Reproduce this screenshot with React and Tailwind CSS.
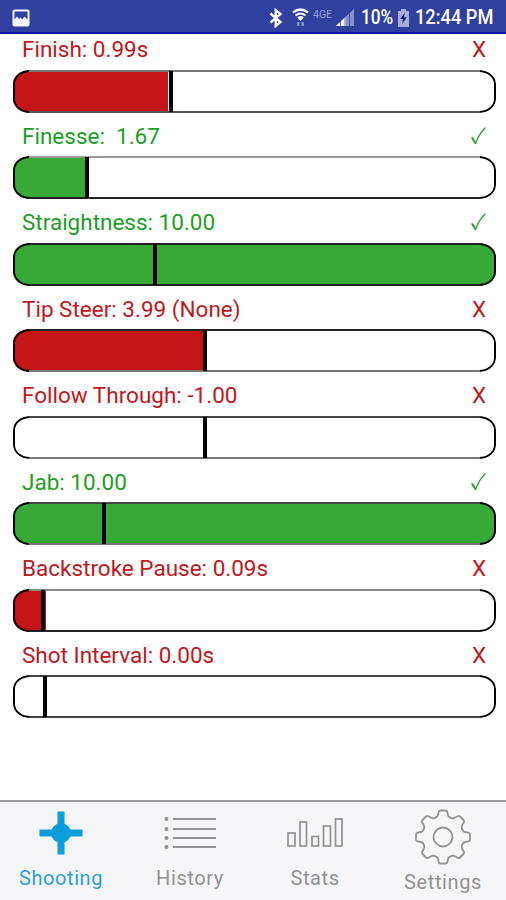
import React from "react";
import clsx from "clsx";

// fill and marker are in pixels, measured from the left edge of the bar
const METRICS = [
  { label: "Finish: 0.99s", pass: false, fill: 155, marker: 156, top: "bg-[#777]", bottom: "bg-[#555]" },
  { label: "Finesse:  1.67", pass: true, fill: 73, marker: 72, top: "bg-[#999]", bottom: "bg-[#222]" },
  { label: "Straightness: 10.00", pass: true, fill: 484, marker: 140, top: "bg-[#222]", bottom: "bg-[#222]" },
  { label: "Tip Steer: 3.99 (None)", pass: false, fill: 190, marker: 190.5, top: "bg-[#222]", bottom: "bg-[#777]" },
  { label: "Follow Through: -1.00", pass: false, fill: 0, marker: 190, top: "bg-[#444]", bottom: "bg-[#777]" },
  { label: "Jab: 10.00", pass: true, fill: 484, marker: 89, top: "bg-[#444]", bottom: "bg-[#777]" },
  { label: "Backstroke Pause: 0.09s", pass: false, fill: 33, marker: 28, top: "bg-[#888]", bottom: "bg-[#222]" },
  { label: "Shot Interval: 0.00s", pass: false, fill: 0, marker: 30, top: "bg-[#444]", bottom: "bg-[#444]" },
];

const StatusBar = () => {
  return (
    <header className="flex h-[34px] shrink-0 items-center border-b-2 border-[#1216a0] bg-[#2f409f] pt-[3px] pr-3 pl-3 text-white">
      <svg width="18" height="18" viewBox="0 0 18 18">
        <rect x="0.5" y="0.5" width="17" height="17" rx="2" fill="#f4f6ff" />
        <path d="M2.5 2.5h13v8l-3-3-2.3 3-1.5-2-1.5 1.5L5 7.5l-2.5 3z" fill="#2f409f" />
      </svg>
      <div className="ml-auto flex items-center">
        <svg className="mr-[9px]" width="14" height="20" viewBox="0 0 14 20" fill="none" stroke="#fff" strokeWidth="2.3">
          <path d="M1.5 5.5L11.5 14 6.7 18V2l4.8 4L1.5 14.5" />
        </svg>
        <svg className="mr-[4px]" width="17" height="20" viewBox="0 0 17 20" fill="none" stroke="#fff">
          <path d="M1 4.5Q8.5-1.5 16 4.5" strokeWidth="2.2" />
          <path d="M3.5 7.5Q8.5 3.5 13.5 7.5" strokeWidth="2" />
          <path d="M5.2 9.4Q8.5 6.6 11.8 9.4L8.5 13z" fill="#fff" stroke="none" />
          <path d="M6.3 14v4M10.7 14v4" stroke="#8f9ad0" strokeWidth="2.2" />
        </svg>
        <span className="mr-[3px] -mt-[5px] w-5 text-[10px] leading-none whitespace-nowrap text-[#97a1d4]">
          <span className="inline-block origin-left scale-x-[1.05]">4GE</span>
        </span>
        <svg className="mr-[7px]" width="18" height="18" viewBox="0 0 18 18">
          <path d="M0 17L18 0v17z" fill="#8792cb" />
          <path d="M0 17L10 7.6V17z" fill="#fff" />
          <path d="M4.5 4v14M9 4v14M13.5 0v18" stroke="#2f409f" strokeWidth="0.8" />
        </svg>
        <span className="w-[33px] text-[19.5px] leading-5 font-medium whitespace-nowrap">
          <span className="inline-block origin-left scale-x-[0.88]">10%</span>
        </span>
        <svg className="mr-[6px] ml-[4px]" width="11" height="18" viewBox="0 0 11 18">
          <path d="M3 0h5v2h3v16H0V2h3z" fill="#a6aed9" />
          <path d="M6.8 3.5L2.3 10h2.6l-.8 5L8.8 8.3H6z" fill="#17236c" />
        </svg>
        <span className="w-[79px] text-[19.5px] leading-5 font-medium whitespace-nowrap">
          <span className="inline-block origin-left scale-x-[0.935]">12:44 PM</span>
        </span>
      </div>
    </header>
  );
};

const CheckMark = () => (
  <svg width="15" height="18" viewBox="0 0 15 18" fill="none" stroke="#22a022" strokeLinecap="round">
    <path d="M1.2 11L4.5 16.2" strokeWidth="1.9" />
    <path d="M4.5 16.2Q8 7 14 1" strokeWidth="1.2" />
  </svg>
);

const Metric = ({ label, pass, fill, marker, top, bottom }) => {
  return (
    <section className="h-[86.5px] pr-[10px] pl-[12.5px]">
      <div
        className={clsx(
          "flex h-[35.5px] items-start justify-between pr-[10px] pl-[9.5px]",
          pass ? "text-[#1ba01f]" : "text-[#c2171b]"
        )}
      >
        <span className="text-[22.5px] leading-[30px] whitespace-pre">{label}</span>
        {pass ? (
          <span className="pt-[6px]">
            <CheckMark />
          </span>
        ) : (
          <span className="text-[22.5px] leading-[30px]">X</span>
        )}
      </div>
      <div className="relative h-[43px] overflow-hidden rounded-[17px/14px] bg-white">
        <div className={clsx("h-full", pass ? "bg-[#36a936]" : "bg-[#c51415]")} style={{ width: fill }} />
        <div className="absolute inset-0 rounded-[17px/14px] border-2 border-black" />
        <div className={clsx("absolute inset-x-[16px] top-0 h-[2px]", top)} />
        <div className={clsx("absolute inset-x-[16px] bottom-0 h-[2px]", bottom)} />
        <div className="absolute inset-y-px w-[4px] bg-black" style={{ left: marker }} />
      </div>
    </section>
  );
};

const ShootingIcon = () => (
  <svg width="44" height="44" viewBox="0 0 44 44" fill="#0b9edb">
    <path d="M18.5 .5h7v43h-7zM.5 18.5h43v7H.5z" />
    <circle cx="22" cy="22" r="10" />
  </svg>
);

const HistoryIcon = () => (
  <svg width="52" height="34" viewBox="0 0 52 34" stroke="#929292" strokeWidth="1.8">
    <path d="M9 3h43M9 13h43M9 22h43M9 31h43" />
    <g fill="#929292" stroke="none">
      <circle cx="2.5" cy="3" r="2" />
      <circle cx="2.5" cy="13" r="2" />
      <circle cx="2.5" cy="22" r="2" />
      <circle cx="2.5" cy="31" r="2" />
    </g>
  </svg>
);

const StatsIcon = () => (
  <svg width="56" height="29" viewBox="0 0 56 29" fill="none" stroke="#929292" strokeWidth="1.7">
    <rect x="1" y="15" width="7" height="13" />
    <rect x="13" y="4" width="6.5" height="24" />
    <rect x="25" y="18.5" width="6.5" height="9.5" />
    <rect x="36.5" y="8" width="7" height="20" />
    <rect x="48.5" y="1" width="6.5" height="27" />
  </svg>
);

const SettingsIcon = () => (
  <svg width="58" height="56" viewBox="-29 -28 58 56" fill="none" stroke="#929292" strokeWidth="1.8" strokeLinejoin="round">
    <circle r="9.5" />
    <path d="M-2.5-26.5H2.5Q4-26.5 4.3-25L5-22Q5.3-20.3 7-19.6L8.5-18.9Q10.3-18.2 11.8-19.2L14.5-20.8Q15.8-21.6 17-20.5L20.5-17Q21.6-15.8 20.8-14.5L19.2-11.8Q18.2-10.3 18.9-8.5L19.6-7Q20.3-5.3 22-5L25.5-4.3Q27-4 27-2.5V2.5Q27 4 25.5 4.3L22 5Q20.3 5.3 19.6 7L18.9 8.5Q18.2 10.3 19.2 11.8L20.8 14.5Q21.6 15.8 20.5 17L17 20.5Q15.8 21.6 14.5 20.8L11.8 19.2Q10.3 18.2 8.5 18.9L7 19.6Q5.3 20.3 5 22L4.3 25Q4 26.5 2.5 26.5H-2.5Q-4 26.5-4.3 25L-5 22Q-5.3 20.3-7 19.6L-8.5 18.9Q-10.3 18.2-11.8 19.2L-14.5 20.8Q-15.8 21.6-17 20.5L-20.5 17Q-21.6 15.8-20.8 14.5L-19.2 11.8Q-18.2 10.3-18.9 8.5L-19.6 7Q-20.3 5.3-22 5L-25.5 4.3Q-27 4-27 2.5V-2.5Q-27-4-25.5-4.3L-22-5Q-20.3-5.3-19.6-7L-18.9-8.5Q-18.2-10.3-19.2-11.8L-20.8-14.5Q-21.6-15.8-20.5-17L-17-20.5Q-15.8-21.6-14.5-20.8L-11.8-19.2Q-10.3-18.2-8.5-18.9L-7-19.6Q-5.3-20.3-5-22L-4.3-25Q-4-26.5-2.5-26.5Z" />
  </svg>
);

const Tab = ({ label, active, className, children }) => (
  <button className={clsx("flex shrink-0 flex-col items-center", active ? "text-[#2d9fdd]" : "text-[#929292]", className)}>
    {children}
    <span className="text-[20px] leading-6 tracking-[0.6px]">{label}</span>
  </button>
);

const TabBar = () => {
  return (
    <nav className="flex h-[100px] shrink-0 items-start border-t-2 border-[#999] bg-[#f6f6f8]">
      <Tab label="Shooting" active className="w-[122px] gap-[11px] pt-[9px]">
        <ShootingIcon />
      </Tab>
      <Tab label="History" className="w-[136px] gap-[16px] pt-[14px]">
        <HistoryIcon />
      </Tab>
      <Tab label="Stats" className="w-[114px] gap-[19px] pt-[16px]">
        <StatsIcon />
      </Tab>
      <Tab label="Settings" className="w-[134px] gap-[5px] pt-[7px] pl-[8px]">
        <SettingsIcon />
      </Tab>
    </nav>
  );
};

export default function App() {
  return (
    <div className="flex h-[900px] w-[506px] flex-col overflow-hidden bg-white font-[Roboto,sans-serif]">
      <StatusBar />
      <main className="min-h-0 flex-1">
        {METRICS.map((metric) => (
          <Metric key={metric.label} {...metric} />
        ))}
      </main>
      <TabBar />
    </div>
  );
}
